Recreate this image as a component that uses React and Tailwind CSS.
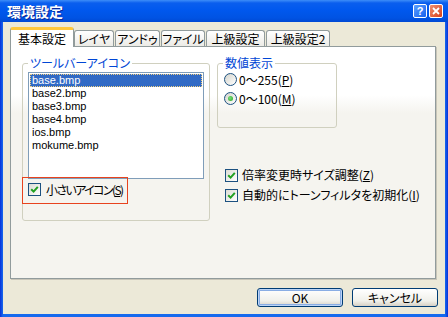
import React from "react";

function Check() {
  return (
    <span className="w-[13px] h-[13px] shrink-0 border border-[#1C5180] bg-[linear-gradient(135deg,#DCDCD4,#FFFFFF)] flex items-center justify-center">
      <svg width="9" height="9" viewBox="0 0 9 9">
        <path d="M1.2 4.2 L3.6 6.6 L7.8 1.8" stroke="#21A121" strokeWidth="2" fill="none" />
      </svg>
    </span>
  );
}

function Radio({ on }) {
  return (
    <span className="w-[13px] h-[13px] shrink-0 rounded-full border border-[#1C5180] bg-[linear-gradient(135deg,#D4D4CC,#FFFFFF)] flex items-center justify-center">
      {on && <span className="w-[5px] h-[5px] rounded-full bg-[radial-gradient(circle_at_40%_40%,#7BE07A,#21A121)]" />}
    </span>
  );
}

function Tab({ w, children }) {
  return (
    <div
      className="h-[16px] border border-b-0 border-[#919B9C] rounded-t-[3px] bg-[linear-gradient(180deg,#FFFFFF,#ECEBE6)] flex items-center justify-center leading-[14px] whitespace-nowrap"
      style={{ width: w }}
    >
      {children}
    </div>
  );
}

const files = ["base2.bmp", "base3.bmp", "base4.bmp", "ios.bmp", "mokume.bmp"];

export default function App() {
  return (
    <div className="w-[448px] h-[317px] flex flex-col bg-[linear-gradient(90deg,#0831D9,#166AEE_3px,#166AEE_445px,#0831D9)] font-['Noto_Sans_CJK_JP',sans-serif] [font-feature-settings:'palt'] text-[12px] text-black overflow-hidden">
      {/* Title bar */}
      <div className="h-[22px] shrink-0 flex items-center justify-between pl-[7px] pr-[5px] bg-[linear-gradient(180deg,#3D8DF8_0px,#0A5EEE_3px,#0058EE_10px,#0053E3_18px,#0049D4_22px)]">
        <span className="text-white text-[14px] font-bold leading-[16px] [text-shadow:1px_1px_0_#0A2A9C]">環境設定</span>
        <div className="flex gap-[2px]">
          <div className="w-[14px] h-[14px] rounded-[2px] border border-white bg-[linear-gradient(135deg,#5CA0FF,#1660EE)] flex items-center justify-center text-white text-[11px] font-bold leading-none font-['Liberation_Sans',sans-serif]">
            ?
          </div>
          <div className="w-[14px] h-[14px] rounded-[2px] border border-white bg-[linear-gradient(135deg,#F09070,#D4401C)] flex items-center justify-center">
            <svg width="8" height="8" viewBox="0 0 8 8">
              <path d="M1 1L7 7M7 1L1 7" stroke="white" strokeWidth="1.8" />
            </svg>
          </div>
        </div>
      </div>

      {/* Body */}
      <div className="flex-1 flex flex-col mx-[3px] mb-[3px] bg-[#ECE9D8] pt-[5px]">
        {/* Tabs */}
        <div className="h-[19px] flex items-end pl-[7px] gap-[1px]">
          <div className="relative z-10 -mb-[1px] h-[20px] w-[64px] bg-white border-x border-[#919B9C] border-t-[3px] border-t-[#FFC83C] rounded-t-[3px] flex items-center justify-center leading-[14px]">
            基本設定
          </div>
          <div className="flex items-end gap-[1px] -ml-[1px]">
            <Tab w={40}>レイヤ</Tab>
            <Tab w={45}>アンドゥ</Tab>
            <Tab w={44}>ファイル</Tab>
            <Tab w={59}>上級設定</Tab>
            <Tab w={64}>上級設定2</Tab>
          </div>
        </div>

        {/* Panel */}
        <div className="ml-[7px] w-[426px] h-[233px] shrink-0 border border-[#919B9C] shadow-[1px_1px_0_#C8C5B8] bg-[linear-gradient(180deg,#FFFFFF_0px,#FFFFFF_48px,#F5F4EF_66px,#F5F4EF_100%)] flex items-start pt-[9px] pl-[11px]">
          {/* Left group */}
          <fieldset className="w-[188px] h-[165px] shrink-0 border border-[#D0D0BF] rounded-[3px] p-0 m-0 min-w-0">
            <legend className="ml-[5px] px-[2px] text-[#0046D5] leading-[14px]">ツールバーアイコン</legend>
            <div className="pl-[5px] pt-[2px]">
              <div className="w-[176px] h-[107px] border border-[#7F9DB9] bg-white p-[1px] text-[11px] font-['Liberation_Sans',sans-serif]">
                <div className="h-[13px] leading-[13px] pl-[2px] bg-[#316AC5] text-white outline outline-1 outline-dotted outline-[#F0D080] -outline-offset-1">
                  base.bmp
                </div>
                {files.map((f) => (
                  <div key={f} className="h-[13px] leading-[13px] pl-[2px]">
                    {f}
                  </div>
                ))}
              </div>
              <div className="relative mt-[4px] h-[13px] flex items-center gap-[5px]">
                <Check />
                <span className="leading-[13px] whitespace-nowrap tracking-[-1.6px]">
                  小さいアイコン(<u>S</u>)
                </span>
                <div className="absolute left-[-6px] top-[-6px] w-[106px] h-[27px] border border-[#E8431E]" />
              </div>
            </div>
          </fieldset>

          {/* Right column */}
          <div className="ml-[7px] flex flex-col">
            <fieldset className="w-[120px] h-[72px] shrink-0 border border-[#D0D0BF] rounded-[3px] p-0 m-0 min-w-0">
              <legend className="ml-[5px] px-[2px] text-[#0046D5] leading-[14px]">数値表示</legend>
              <div className="pl-[6px]">
                <div className="h-[19px] flex items-center gap-[2px]">
                  <Radio />
                  <span className="leading-[14px] whitespace-nowrap">
                    0〜255(<u>P</u>)
                  </span>
                </div>
                <div className="h-[19px] flex items-center gap-[2px]">
                  <Radio on />
                  <span className="leading-[14px] whitespace-nowrap">
                    0〜100(<u>M</u>)
                  </span>
                </div>
              </div>
            </fieldset>
            <div className="mt-[37px] pl-[8px]">
              <div className="h-[20px] flex items-center gap-[4px]">
                <Check />
                <span className="leading-[14px] whitespace-nowrap">
                  倍率変更時サイズ調整(<u>Z</u>)
                </span>
              </div>
              <div className="h-[20px] flex items-center gap-[4px]">
                <Check />
                <span className="leading-[14px] whitespace-nowrap">
                  自動的にトーンフィルタを初期化(<u>I</u>)
                </span>
              </div>
            </div>
          </div>
        </div>

        {/* Buttons */}
        <div className="mt-[9px] flex justify-end gap-[9px] pr-[7px]">
          <button className="w-[86px] h-[19px] rounded-[3px] border border-[#003C74] bg-[linear-gradient(180deg,#FFFFFF,#F0F0EA_70%,#D6D0C5)] shadow-[inset_0_0_0_1px_#BCD4F6,inset_0_0_0_2px_#89ADE4] flex items-center justify-center leading-[14px] text-[12px]">
            OK
          </button>
          <button className="w-[86px] h-[19px] rounded-[3px] border border-[#003C74] bg-[linear-gradient(180deg,#FFFFFF,#F0F0EA_70%,#D6D0C5)] flex items-center justify-center leading-[14px] text-[12px]">
            キャンセル
          </button>
        </div>
      </div>
    </div>
  );
}
